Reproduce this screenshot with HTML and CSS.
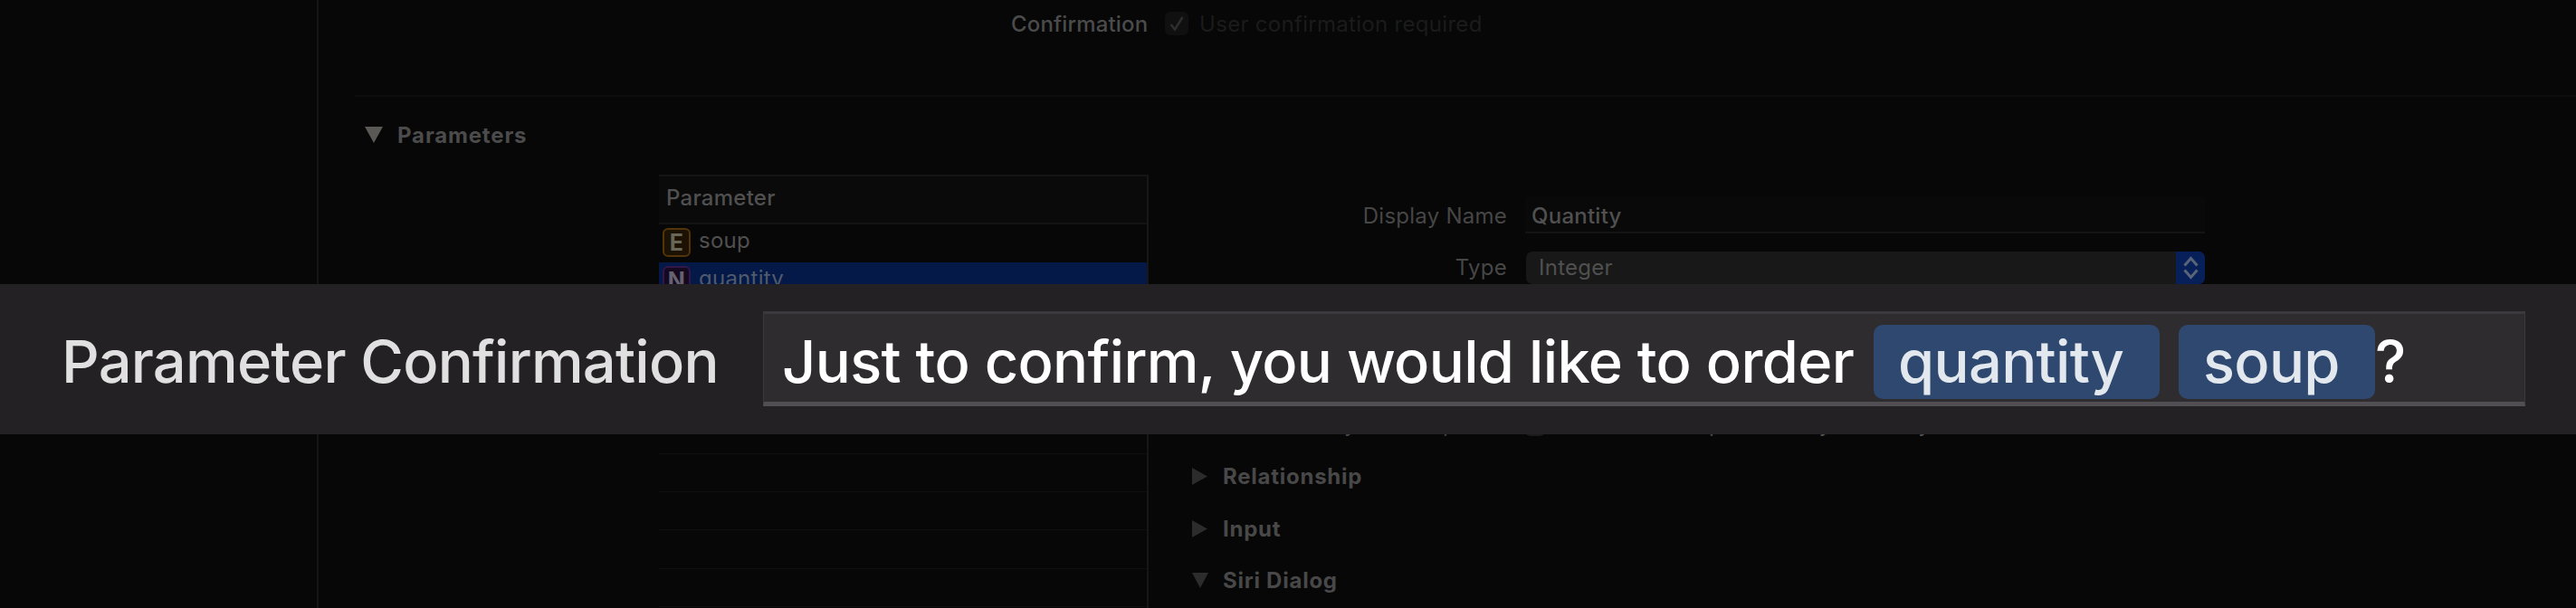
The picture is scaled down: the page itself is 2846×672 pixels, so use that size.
FILE: index.html
```
<!DOCTYPE html>
<html lang="en">
<head>
<meta charset="utf-8">
<title>Intent Editor</title>
<link rel="stylesheet" href="styles.css">
</head>
<body>
<div class="window">
  <aside class="sidebar"></aside>
  <main class="editor">
    <section class="confirm-row">
      <span class="confirm-label">Confirmation</span>
      <span class="checkbox"><svg viewBox="0 0 26 26"><path d="M6.500 14l4.500 5.500L19.500 6"/></svg></span>
      <span class="confirm-text">User confirmation required</span>
    </section>
    <section class="params">
      <h2 class="params-title"><svg class="tri" viewBox="0 0 20 18"><path d="M0 0h20L10 18z"/></svg><span>Parameters</span></h2>
      <div class="columns">
        <div class="table">
          <div class="thead"><span>Parameter</span></div>
          <div class="row"><span class="badge badge-e">E</span><span>soup</span></div>
          <div class="row selected"><span class="badge badge-n">N</span><span>quantity</span></div>
          <div class="row"></div><div class="row"></div><div class="row"></div><div class="row"></div><div class="row"></div><div class="row"></div><div class="row"></div><div class="row"></div>
        </div>
        <div class="detail">
          <div class="field name-field"><span class="label">Display Name</span><span class="input">Quantity</span></div>
          <div class="field type-field"><span class="label">Type</span><span class="select"><span>Integer</span><span class="knob"><svg viewBox="0 0 32 36"><path d="M9.500 15.500l7-8 7 8M9.500 20.500l7 8 7-8"/></svg></span></span></div>
          <div class="field dyn-field"><span class="label">Dynamic Options</span><span class="mini"></span><span>Intent handler provides dynamically</span></div>
          <div class="group"><svg class="tri-r" viewBox="0 0 17 19"><path d="M0 0v19l17-9.500z"/></svg><span>Relationship</span></div>
          <div class="group"><svg class="tri-r" viewBox="0 0 17 19"><path d="M0 0v19l17-9.500z"/></svg><span>Input</span></div>
          <div class="group"><svg class="tri-d" viewBox="0 0 18 17"><path d="M0 0h18l-9 17z"/></svg><span>Siri Dialog</span></div>
        </div>
      </div>
    </section>
  </main>
  <div class="callout">
    <span class="callout-label">Parameter Confirmation</span>
    <div class="callout-input"><span class="phrase">Just to confirm, you would like to order</span><span class="token token-q">quantity</span><span class="token token-s">soup</span><span class="mark">?</span></div>
  </div>
</div>
</body>
</html>
```
FILE: styles.css
```
* { box-sizing: border-box; }
body { margin: 0; background: #070707; }
span { white-space: nowrap; }
svg { display: block; flex: none; }
.window { position: relative; width: 2846px; height: 672px; overflow: hidden; display: flex; background: #070707; font-family: Inter, "Liberation Sans", sans-serif; font-size: 24px; line-height: 30px; letter-spacing: 0.25px; color: #505050; }
.sidebar { width: 352px; flex: none; border-right: 2px solid #151515; }
.editor { flex: 1; padding-left: 40px; }
.confirm-row { height: 107px; border-bottom: 2px solid #0d0d0d; display: flex; padding: 12px 0 0 725px; }
.confirm-label { width: 152px; font-weight: 500; letter-spacing: 0.15px; color: #4b4b4b; }
.checkbox { width: 26px; height: 26px; margin: 1px 12px 0 18px; background: #101010; border-radius: 6px; }
.checkbox path { fill: none; stroke: #2e2e2e; stroke-width: 2.5; }
.confirm-text { letter-spacing: 0.3px; color: #1b1b1b; }
.params { padding-top: 28px; }
.params-title { margin: 0; height: 58px; display: flex; gap: 16px; padding-left: 11px; font-size: 24px; font-weight: 700; letter-spacing: 0.85px; color: #4b4b4b; }
.tri { width: 20px; height: 18px; margin-top: 5px; fill: #5a5956; }
.columns { display: flex; padding-left: 336px; }
.table { width: 541px; height: 600px; border-right: 2px solid #171717; border-top: 2px solid #141414; flex: none; }
.thead { height: 53px; padding: 9px 0 0 8px; border-bottom: 2px solid #131313; background: #0a0a0a; font-weight: 500; }
.row { height: 42.3px; display: flex; padding-left: 4px; gap: 9px; border-bottom: 1px solid #0f0f0f; }
.row:nth-child(2) { border-bottom: 0; padding-top: 3px; }
.row.selected { background: #041947; padding-top: 3px; border: 0; color: #505a6c; }
.badge { width: 31px; height: 32px; margin-top: 1px; border: 2px solid; border-radius: 6px; font-weight: 700; font-size: 25px; line-height: 29px; text-align: center; color: #686657; }
.badge-e { border-color: #53330a; background: #1c1204; }
.badge-n { border-color: #33164a; background: #14091f; color: #666270; }
.detail { padding: 25px 0 0 48px; }
.field { display: flex; height: 57px; }
.label { width: 348px; text-align: right; color: #464646; }
.name-field { height: 60px; }
.name-field .label { padding-top: 6px; }
.input { margin-left: 20px; width: 751px; height: 40px; padding: 6px 0 0 7px; border-bottom: 2px solid #141414; background: #090909; font-weight: 500; }
.type-field .label { padding-top: 3px; }
.select { margin-left: 21px; width: 750px; height: 36px; display: flex; justify-content: space-between; padding: 3px 0 0 14px; border-radius: 7px; background: #181818; }
.knob { width: 32px; height: 36px; margin-top: -3px; border-radius: 0 7px 7px 0; background: #07205a; }
.knob path { fill: none; stroke: #586478; stroke-width: 3; }
.dyn-field { height: 58px; margin-top: 119px; }
.mini { width: 22px; height: 26px; margin: 2px 14px 0 20px; border-radius: 6px; background: #1b1b1b; }
.group { display: flex; height: 57.5px; font-weight: 700; letter-spacing: 0.75px; gap: 17px; color: #484848; }
.tri-r { width: 17px; height: 19px; margin-top: 5px; fill: #2c2c2c; }
.tri-d { width: 18px; height: 17px; margin: 6px -1px 0 0; fill: #2c2c2c; }
.callout { position: absolute; left: 0; top: 314px; width: 2846px; height: 166px; background: #232124; display: flex; align-items: flex-start; padding: 30px 0 0 68px; font-size: 65px; line-height: 78px; letter-spacing: -0.67px; }
.callout-label { width: 775px; padding-top: 17px; font-weight: 500; letter-spacing: -0.78px; color: #e0e0e0; }
.callout-input { width: 1947px; height: 105px; flex: none; display: flex; background: #2f2c30; border: 1px solid #3b393d; border-top-width: 3px; border-bottom: 5px solid #514f53; color: #fff; }
.phrase { width: 1205px; padding: 14px 0 0 20px; flex: none; font-weight: 500; }
.token { flex: none; height: 82px; margin: 12px 0 0 21px; padding: 2px 0 0 27px; border-radius: 10px; background: #2e486f; color: #e2e8ee; font-weight: 500; }
.token-q { width: 316px; }
.token-s { width: 217px; }
.mark { padding-top: 14px; font-weight: 500; }
```
